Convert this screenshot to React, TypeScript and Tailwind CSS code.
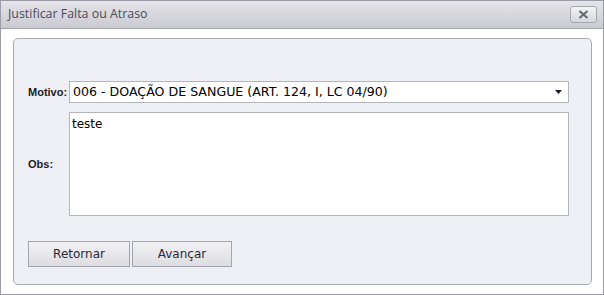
import React from "react";

export default function App() {
  const font = { fontFamily: "'DejaVu Sans', Tahoma, sans-serif" };
  const bold = { fontFamily: "'Liberation Sans', Arial, sans-serif" };
  return (
    <div className="w-[604px] h-[295px] border border-[#9c9ca8] bg-white flex flex-col" style={font}>
      <div className="h-[28px] shrink-0 border-b border-[#a2a2ac] bg-gradient-to-b from-[#e4e4e9] to-[#cacad1] flex items-center justify-between pl-[7px] pr-[6px]">
        <span className="text-[12.4px] text-[#4b4b5e]" style={{ fontFamily: "'Open Sans', 'DejaVu Sans', sans-serif" }}>Justificar Falta ou Atraso</span>
        <button className="w-[27px] h-[17px] mb-[1px] rounded-[3px] border border-[#a6a6b0] bg-gradient-to-b from-[#f4f4f6] to-[#d6d6dc] flex items-center justify-center">
          <svg width="11" height="9" viewBox="0 0 11 9">
            <path d="M1.5 1 L9.5 8 M9.5 1 L1.5 8" stroke="#6a6a74" strokeWidth="2.2" />
          </svg>
        </button>
      </div>
      <div className="flex-1 pt-[9px] pl-[12px] pr-[11px] pb-[9px]">
        <div className="h-full border border-[#a9a9b3] rounded-[5px] bg-[#eff0f5] pl-[14px] pt-[42px] flex flex-col">
          <div className="flex items-center h-[22px]">
            <div className="w-[41px] text-[11px] font-bold text-[#1c1c2a] whitespace-nowrap" style={bold}>Motivo:</div>
            <div className="w-[500px] h-[22px] border border-[#b4b4bc] bg-white flex items-center justify-between pl-[3px] pr-[6px]">
              <span className="text-[12.6px] text-black">006 - DOAÇÃO DE SANGUE (ART. 124, I, LC 04/90)</span>
              <svg width="7" height="4" viewBox="0 0 7 4"><path d="M0 0 H7 L3.5 4 Z" fill="#1a1a2a" /></svg>
            </div>
          </div>
          <div className="flex items-center mt-[9px]">
            <div className="w-[41px] text-[11px] font-bold text-[#1c1c2a] whitespace-nowrap" style={bold}>Obs:</div>
            <div className="w-[500px] h-[104px] border border-[#b4b4bc] bg-white pl-[2px] pt-[1px] leading-[18px]">
              <span className="text-[12px] text-black">teste</span>
            </div>
          </div>
          <div className="flex gap-[2px] mt-[25px]">
            <button className="w-[102px] h-[26px] border border-[#a4a4ae] bg-gradient-to-b from-[#f2f2f5] to-[#dcdce2] text-[12px] text-[#2a2a3a]">Retornar</button>
            <button className="w-[100px] h-[26px] border border-[#a4a4ae] bg-gradient-to-b from-[#f2f2f5] to-[#dcdce2] text-[12px] text-[#2a2a3a]">Avançar</button>
          </div>
        </div>
      </div>
    </div>
  );
}
